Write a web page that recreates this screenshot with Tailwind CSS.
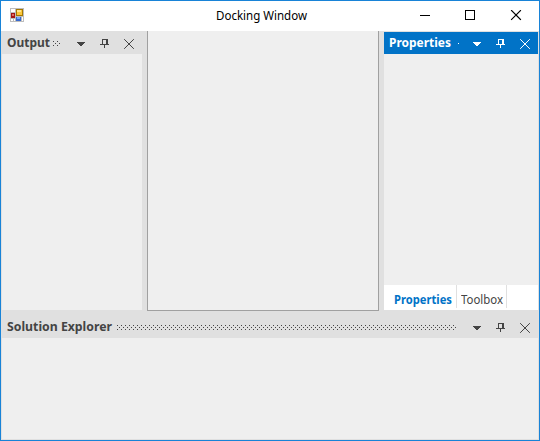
<!DOCTYPE html>
<html lang="en"><head><meta charset="utf-8"><title>Docking Window</title>
<script src="https://cdn.jsdelivr.net/npm/@tailwindcss/browser@4"></script></head>
<body class="overflow-hidden">
<svg class="absolute w-0 h-0" aria-hidden="true"><defs>
<pattern id="grip" width="4" height="4" patternUnits="userSpaceOnUse"><path d="M0 0h1v1h-1zM2 2h1v1h-1z" fill="#444"/></pattern>
<symbol id="tools" viewBox="0 0 60 12"><path d="M0 4h8v1h-1v1h-1v1h-1v1h-2v-1h-1v-1h-1v-1h-1z" fill="currentColor"/><path d="M25 1h6v1h-6zM25 1h1v5h-1zM29 1h2v5h-2zM23 6h9v1h-9zM27 7h1v3h-1z" fill="currentColor"/><path d="M47.500 1.500l9 9M56.500 1.500l-9 9" stroke="currentColor" stroke-width="1" stroke-linecap="square" fill="none"/></symbol>
</defs></svg>
<main class="w-[540px] h-[441px] border border-[#1883d7] bg-[#e0e0e0] flex flex-col font-['Noto_Sans','Open_Sans',sans-serif] text-[12px] text-[#444]">
<header class="h-[30px] shrink-0 bg-white flex items-center text-black">
<svg class="ml-[9px] mt-[7px] self-start" width="14" height="14" shape-rendering="crispEdges"><path fill="#bdbdbd" d="M0 0h14v14H0z"/><path fill="#fff" d="M1 1h4v3H1zM1 11h2v2H1zM4 11h1v2H4zM12 9h1v4h-1z"/><path fill="#a57800" d="M6 1h7v7H6z"/><path fill="#fbc73b" d="M7 2h5v5H7z"/><path fill="#ffe58b" d="M7 2h4v2H7z"/><path fill="#a31515" d="M1 5h4v5H1z"/><path fill="#e06a62" d="M2 6h2v2H2z"/><path fill="#3769cf" d="M6 9h5v4H6z"/><path fill="#78a9f7" d="M7 9h3v2H7z"/></svg>
<h1 class="ml-[192px] whitespace-nowrap"><svg class="block" width="94" height="20"><text x="0" y="14" font-size="12" textLength="91" lengthAdjust="spacingAndGlyphs">Docking Window</text></svg></h1>
<svg class="ml-auto mr-[15px]" width="104" height="12" fill="none" stroke="#000"><path d="M0 5.500h10M45.500 0.500h9v9h-9z" shape-rendering="crispEdges"/><path d="M91.500 0.500l9 9M100.500 0.500l-9 9" stroke-width="1.1" stroke-linecap="square"/></svg>
</header>
<section class="flex h-[279px] shrink-0">
<aside class="w-[141px] pl-px flex flex-col"><div class="h-[23px] flex items-center pl-[5px]"><svg width="134" height="23"><text x="0" y="16" font-size="12" font-weight="700" fill="#444" textLength="43" lengthAdjust="spacingAndGlyphs">Output</text><svg x="46" y="10" width="8" height="5"><rect width="8" height="5" fill="url(#grip)"/></svg><use href="#tools" x="70" y="7" width="60" height="12"/></svg></div><div class="flex-1 bg-[#efefef]"></div></aside>
<div class="w-[5px]"></div>
<div class="w-[232px] bg-[#efefef] border-x border-[#a0a0a0]"></div>
<div class="w-[5px]"></div>
<aside class="w-[154px] pt-px flex flex-col"><div class="h-[22px] bg-[#0173c7] text-white pl-[5px]"><svg width="149" height="22"><text x="0" y="15" font-size="12" font-weight="700" fill="#fff" textLength="62" lengthAdjust="spacingAndGlyphs">Properties</text><path d="M69 11h1v1h-1z" fill="#fff"/><use href="#tools" x="84" y="6" width="60" height="12"/></svg></div><div class="flex-1 bg-[#efefef]"></div>
<div class="h-[25px] bg-white flex"><div class="w-[73px] h-[23px] pl-[10px] border-r border-[#e0e0e0]"><svg width="61" height="23"><text x="0" y="19" font-size="12" font-weight="700" fill="#0173c7" textLength="58" lengthAdjust="spacingAndGlyphs">Properties</text></svg></div><div class="w-[50px] h-[23px] pl-1 border-r border-[#e0e0e0]"><svg width="44" height="23"><text x="0" y="19" font-size="12" fill="#444" textLength="42" lengthAdjust="spacingAndGlyphs">Toolbox</text></svg></div></div></aside>
</section>
<div class="h-px ml-[146px] w-[232px] bg-[#a0a0a0] shrink-0"></div>
<section class="flex-1 flex flex-col pt-1 px-px pb-px"><div class="h-[23px] pl-[5px]"><svg width="530" height="23"><text x="0" y="16" font-size="12" font-weight="700" fill="#444" textLength="105" lengthAdjust="spacingAndGlyphs">Solution Explorer</text><svg x="110" y="10" width="340" height="5"><rect width="340" height="5" fill="url(#grip)"/></svg><use href="#tools" x="466" y="7" width="60" height="12"/></svg></div><div class="flex-1 bg-[#efefef]"></div></section>
</main></body></html>
